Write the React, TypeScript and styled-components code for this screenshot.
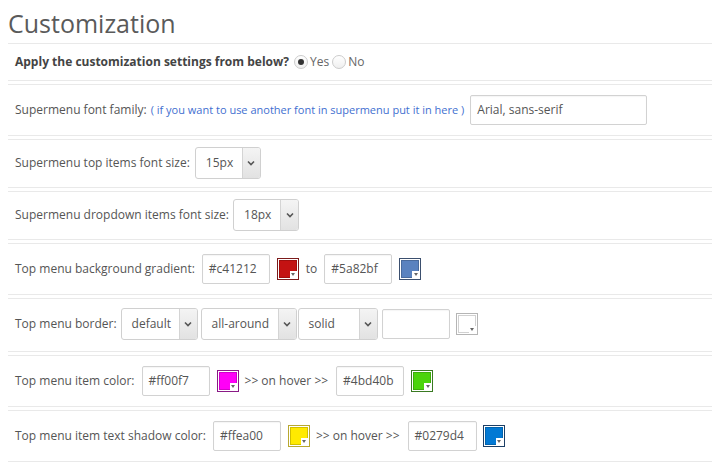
import React from "react";
import styled, { createGlobalStyle } from "styled-components";

const GlobalStyle = createGlobalStyle`
  body {
    margin: 8px;
    background: #ffffff;
    font-family: "Open Sans", "Liberation Sans", sans-serif;
    color: #555555;
  }
`;

const Page = styled.div`
  width: 704px;
`;

const Title = styled.h1`
  margin: 0;
  height: 35px;
  font-size: 25px;
  line-height: 30px;
  font-weight: 400;
  color: #5a5a5a;
  padding-left: 0;
`;

const Row = styled.div<{ $pad: string }>`
  display: flex;
  align-items: center;
  border-top: 1px solid #e9e9e9;
  border-bottom: 1px solid #e9e9e9;
  padding: ${(p) => p.$pad};
  margin-bottom: 3px;
  font-size: 12px;
  line-height: 18px;
  color: #555555;
  white-space: nowrap;
`;

const Label = styled.span<{ $gap?: number }>`
  margin-right: ${(p) => p.$gap ?? 7}px;
`;

const BoldLabel = styled.span`
  font-weight: 700;
  color: #444444;
  margin-right: 5px;
`;

const Hint = styled.span`
  font-size: 11px;
  color: #3f6fd0;
  margin-right: 6px;
`;

const RadioGroup = styled.label`
  display: inline-flex;
  align-items: center;
  margin-right: 3px;
  color: #666666;
`;

const RadioCircle = styled.span<{ $checked?: boolean }>`
  width: 14px;
  height: 14px;
  box-sizing: border-box;
  border-radius: 50%;
  border: 1px solid #cccccc;
  background: linear-gradient(#ffffff, #efefef);
  margin-right: 2px;
  display: inline-flex;
  align-items: center;
  justify-content: center;
  &::after {
    content: "";
    display: ${(p) => (p.$checked ? "block" : "none")};
    width: 6px;
    height: 6px;
    border-radius: 50%;
    background: #333333;
  }
`;

const TextInput = styled.div<{ $w: number; $h?: number }>`
  box-sizing: border-box;
  width: ${(p) => p.$w}px;
  height: ${(p) => p.$h ?? 30}px;
  border: 1px solid #d2d2d2;
  border-radius: 2px;
  box-shadow: inset 0 1px 1px rgba(0, 0, 0, 0.04);
  background: #ffffff;
  padding: 0 6px;
  display: flex;
  align-items: center;
  font-size: 12px;
  color: #555555;
`;

const SelectBox = styled.div<{ $w: number }>`
  box-sizing: border-box;
  width: ${(p) => p.$w}px;
  height: 32px;
  border: 1px solid #d0d0d0;
  border-radius: 3px;
  background: #ffffff;
  display: flex;
  align-items: stretch;
  font-size: 12px;
  color: #555555;
  overflow: hidden;
`;

const SelectValue = styled.span`
  flex: 1;
  display: flex;
  align-items: center;
  padding-left: 10px;
`;

const SelectArrow = styled.span`
  width: 17px;
  border-left: 1px solid #d4d4d4;
  background: linear-gradient(#f4f4f4, #e2e2e2);
  display: flex;
  align-items: center;
  justify-content: center;
`;

const Swatch = styled.span<{ $c: string; $b: string }>`
  position: relative;
  box-sizing: border-box;
  width: 22px;
  height: 22px;
  border: 1px solid ${(p) => p.$b};
  padding: 1px;
  background: #ffffff;
  display: inline-block;
  &::before {
    content: "";
    display: block;
    width: 100%;
    height: 100%;
    background: ${(p) => p.$c};
    box-shadow: inset 0 0 0 1px rgba(0, 0, 0, 0.18);
  }
`;

const SwatchTab = styled.span`
  position: absolute;
  right: 1px;
  bottom: 1px;
  width: 7px;
  height: 7px;
  background: #ffffff;
  display: flex;
  align-items: center;
  justify-content: center;
`;

const Sep = styled.span<{ $l: number; $r: number }>`
  margin: 0 ${(p) => p.$r}px 0 ${(p) => p.$l}px;
  color: #555555;
`;

const Chevron = () => (
  <svg width="8" height="6" viewBox="0 0 8 6">
    <polyline points="1,1.5 4,4.5 7,1.5" fill="none" stroke="#555" strokeWidth="1.6" />
  </svg>
);

const Select = ({ w, value, ml = 0 }: { w: number; value: string; ml?: number }) => (
  <SelectBox $w={w} style={ml ? { marginLeft: ml } : undefined}>
    <SelectValue>{value}</SelectValue>
    <SelectArrow>
      <Chevron />
    </SelectArrow>
  </SelectBox>
);

const ColorSwatch = ({ c, b }: { c: string; b: string }) => (
  <Swatch $c={c} $b={b}>
    <SwatchTab>
      <svg width="4" height="3" viewBox="0 0 4 3">
        <polygon points="0,0 4,0 2,3" fill="#666" />
      </svg>
    </SwatchTab>
  </Swatch>
);

const Gap = styled.span<{ $w: number }>`
  display: inline-block;
  width: ${(p) => p.$w}px;
`;

export default function App() {
  return (
    <>
      <GlobalStyle />
      <Page>
        <Title>Customization</Title>

        <Row $pad="9px 7px">
          <BoldLabel>Apply the customization settings from below?</BoldLabel>
          <RadioGroup>
            <RadioCircle $checked />
            Yes
          </RadioGroup>
          <RadioGroup>
            <RadioCircle />
            No
          </RadioGroup>
        </Row>

        <Row $pad="10px 7px">
          <Label $gap={4}>Supermenu font family:</Label>
          <Hint>( if you want to use another font in supermenu put it in here )</Hint>
          <TextInput $w={177}>Arial, sans-serif</TextInput>
        </Row>

        <Row $pad="7px 7px 8px">
          <Label $gap={5}>Supermenu top items font size:</Label>
          <Select w={66} value="15px" />
        </Row>

        <Row $pad="7px 7px 8px">
          <Label $gap={4}>Supermenu dropdown items font size:</Label>
          <Select w={66} value="18px" />
        </Row>

        <Row $pad="10px 7px">
          <Label>Top menu background gradient:</Label>
          <TextInput $w={68}>#c41212</TextInput>
          <Gap $w={7} />
          <ColorSwatch c="#c41212" b="#7c1b1b" />
          <Sep $l={7} $r={7}>to</Sep>
          <TextInput $w={68}>#5a82bf</TextInput>
          <Gap $w={7} />
          <ColorSwatch c="#5a82bf" b="#3b4f6e" />
        </Row>

        <Row $pad="9px 7px 11px">
          <Label $gap={4}>Top menu border:</Label>
          <Select w={77} value="default" />
          <Select w={96} value="all-around" ml={3} />
          <Select w={80} value="solid" ml={1} />
          <Gap $w={4} />
          <TextInput $w={68} />
          <Gap $w={6} />
          <ColorSwatch c="#ffffff" b="#b5b5b5" />
        </Row>

        <Row $pad="10px 7px">
          <Label>Top menu item color:</Label>
          <TextInput $w={68}>#ff00f7</TextInput>
          <Gap $w={7} />
          <ColorSwatch c="#ff00f7" b="#8a1a86" />
          <Sep $l={6} $r={8}>&gt;&gt; on hover &gt;&gt;</Sep>
          <TextInput $w={68}>#4bd40b</TextInput>
          <Gap $w={7} />
          <ColorSwatch c="#4bd40b" b="#3a7a22" />
        </Row>

        <Row $pad="10px 7px">
          <Label>Top menu item text shadow color:</Label>
          <TextInput $w={68}>#ffea00</TextInput>
          <Gap $w={7} />
          <ColorSwatch c="#ffea00" b="#b8a830" />
          <Sep $l={6} $r={8}>&gt;&gt; on hover &gt;&gt;</Sep>
          <TextInput $w={69}>#0279d4</TextInput>
          <Gap $w={6} />
          <ColorSwatch c="#0279d4" b="#1c3f66" />
        </Row>
      </Page>
    </>
  );
}
